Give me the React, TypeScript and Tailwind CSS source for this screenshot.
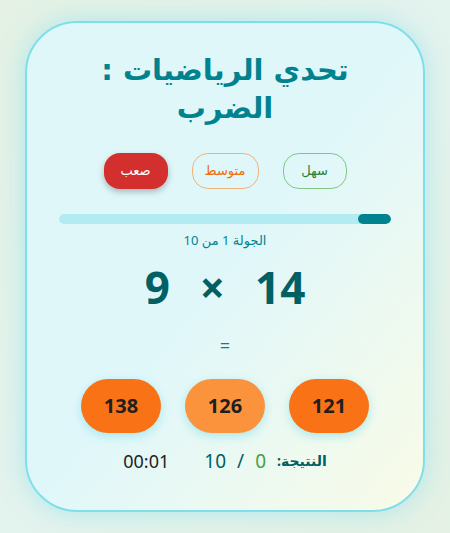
const answers = ['121', '126', '138']

export default function App(): JSX.Element {
  const progress = 10

  return (
    <div
      dir="rtl"
      className="min-h-screen flex items-center justify-center bg-gradient-to-br from-[#e4f1e4] via-[#e3f3ee] to-[#e4f1e4]"
      style={{ fontFamily: '"Noto Sans", "DejaVu Sans", sans-serif' }}
    >
      <div className="w-[400px] h-[491px] rounded-[52px] border-2 border-[#80deea] bg-gradient-to-br from-[#e0f7fa] via-[#e0f7fa] to-[#f9fbe7] shadow-[0_0_24px_rgba(128,222,234,0.55)] px-[32px] pt-[28px] flex flex-col items-center">
        <h1 className="text-[29px] leading-[38px] font-bold text-[#00838f] text-center" style={{ fontFamily: '"DejaVu Sans", sans-serif' }}>
          <span className="block">تحدي الرياضيات :</span>
          <span className="block">الضرب</span>
        </h1>

        <div className="mt-[26px] flex gap-[24px]">
          <button className="w-[64px] h-[36px] rounded-2xl border border-[#81c784] text-[#2e7d32] text-[13px] font-normal">
            سهل
          </button>
          <button className="w-[67px] h-[36px] rounded-2xl border border-[#f0b27a] text-[#ef6c00] text-[13px] font-normal">
            متوسط
          </button>
          <button className="w-[64px] h-[36px] rounded-2xl bg-[#d32f2f] text-white text-[13px] font-normal shadow-[0_3px_6px_rgba(0,0,0,0.25)]">
            صعب
          </button>
        </div>

        <div className="mt-[25px] w-[332px] h-[10px] rounded-full bg-[#b2ebf2] overflow-hidden">
          <div className="h-full rounded-full bg-[#00838f]" style={{ width: `${progress}%` }} />
        </div>

        <div className="mt-[6px] text-[13px] leading-[20px] text-[#00838f]">الجولة 1 من 10</div>

        <div dir="ltr" className="mt-[9px] flex items-center gap-[30px] text-[44px] leading-[56px] font-bold text-[#006064]">
          <span>9</span>
          <span>×</span>
          <span>14</span>
        </div>

        <div className="mt-[18px] text-[18px] leading-[24px] text-[#00838f]">=</div>

        <div className="mt-[22px] flex gap-[24px]">
          {answers.map((a, i) => (
            <button
              key={a}
              className={
                i === 1
                  ? 'w-[80px] h-[54px] rounded-full bg-[#fb923c] text-[#1f1f1f] text-[20px] font-bold shadow-[0_3px_10px_rgba(128,222,234,0.6)]'
                  : 'w-[80px] h-[54px] rounded-full bg-[#f97316] text-[#1f1f1f] text-[20px] font-bold shadow-[0_3px_10px_rgba(128,222,234,0.6)]'
              }
            >
              {a}
            </button>
          ))}
        </div>

        <div className="mt-[16px] flex items-center gap-[35px] text-[16px] leading-[24px]">
          <div className="flex items-center gap-[11px] text-[#006064]">
            <span className="font-bold text-[14px]">النتيجة:</span>
            <span dir="ltr" className="flex items-center gap-[11px] text-[19px]">
              <span>10</span>
              <span>/</span>
              <span className="text-[#43a047]">0</span>
            </span>
          </div>
          <div className="text-[#1f1f1f] text-[18px]">00:01</div>
        </div>
      </div>
    </div>
  )
}
